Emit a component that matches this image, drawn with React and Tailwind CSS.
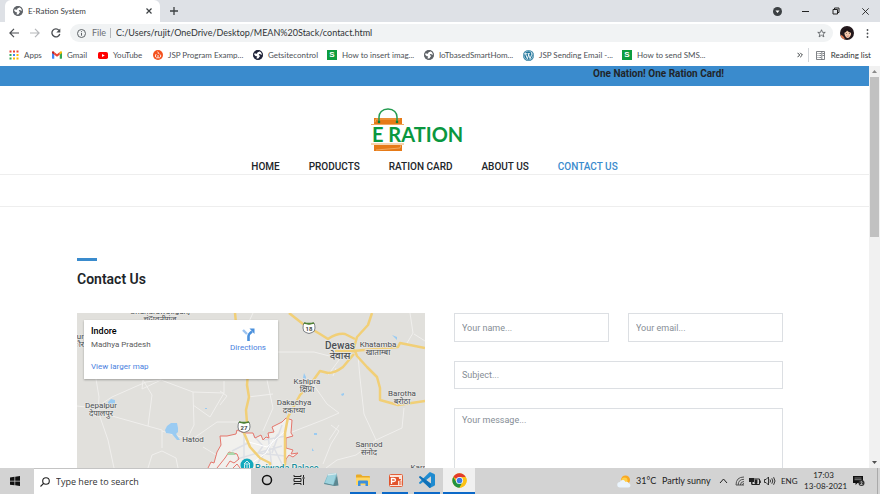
import React from "react";

const ui = "font-['Lato','Open_Sans',sans-serif]";

function Globe({ color = "#5f6368" }) {
  return (
    <svg width="10" height="10" viewBox="0 0 24 24" className="shrink-0">
      <circle cx="12" cy="12" r="11.500" fill={color} />
      <path
        d="M3 8c3-1 3 2 6 1 2-1 1-3 3-4 2 0 3-1 3-3 5 1 7 5 7 9-2 1-3 0-4-1-2-1-4 0-4 2 1 2 4 1 3 3-1 1-3 2-3 5-3 2-6 1-6-1 2-1 3-3 1-4-3 0-6-3-7-5z"
        fill="#fff"
      />
      <circle cx="12" cy="12" r="10.500" fill="none" stroke={color} strokeWidth="2.500" />
    </svg>
  );
}

function AppsIcon() {
  const colors = ["#ea4335", "#ea4335", "#ea4335", "#34a853", "#4285f4", "#fbbc04", "#34a853", "#fbbc04", "#fbbc04"];
  return (
    <svg width="10" height="10" viewBox="0 0 10 10" className="shrink-0">
      {colors.map((c, i) => (
        <rect key={i} x={(i % 3) * 3.500 + 0.5} y={Math.floor(i / 3) * 3.500 + 0.5} width="2" height="2" fill={c} />
      ))}
    </svg>
  );
}

function GmailIcon() {
  return (
    <svg width="10" height="8" viewBox="0 0 20 15" className="shrink-0">
      <path d="M0 2v12c0 .6.400 1 1 1h3.500V6z" fill="#4285f4" />
      <path d="M20 2v12c0 .6-.400 1-1 1h-3.500V6z" fill="#34a853" />
      <path d="M4.500 1.500L10 6l5.500-4.500V7L10 11 4.500 7z" fill="#ea4335" />
      <path d="M0 2C0 0 2-.5 3.500.5l1 1V7L0 3.500z" fill="#c5221f" />
      <path d="M20 2c0-2-2-2.500-3.500-1.500l-1 1V7L20 3.500z" fill="#fbbc04" />
    </svg>
  );
}

function YoutubeIcon() {
  return (
    <svg width="10" height="7" viewBox="0 0 20 14" className="shrink-0">
      <rect width="20" height="14" rx="3.500" fill="#f00" />
      <path d="M8 4l5.500 3L8 10z" fill="#fff" />
    </svg>
  );
}

function JspIcon() {
  return (
    <svg width="10" height="10" viewBox="0 0 20 20" className="shrink-0">
      <circle cx="10" cy="10" r="10" fill="#f4511e" />
      <path d="M9 3.500c3 1.500 1 3.500 2 4.500M6.500 8c-2 2-2.500 6 .5 7.500h6c3.500-1.500 3-6 0-7.500M8 12h4" stroke="#fff" strokeWidth="1.800" fill="none" />
    </svg>
  );
}

function SIcon() {
  return (
    <span className="flex h-[10px] w-[10px] shrink-0 items-center justify-center bg-[#0c9d3f] font-['Liberation_Sans',sans-serif] text-[8px] font-bold leading-none text-white">
      S
    </span>
  );
}

function WordpressIcon() {
  return (
    <svg width="11" height="11" viewBox="0 0 24 24" className="shrink-0">
      <circle cx="12" cy="12" r="12" fill="#21759b" />
      <circle cx="12" cy="12" r="10" fill="none" stroke="#fff" strokeWidth="1.200" />
      <path d="M3.500 8h5M10 8h5M5.500 8l4 11 3-8.500M11.500 8l4 11 3.500-9.500c.5-2-1.500-2.500-1-4.500" stroke="#fff" strokeWidth="2" fill="none" />
    </svg>
  );
}

const bookmarks = [
  { label: "Apps", icon: <AppsIcon />, width: "w-[43px]" },
  { label: "Gmail", icon: <GmailIcon />, width: "w-[46px]" },
  { label: "YouTube", icon: <YoutubeIcon />, width: "w-[55px]" },
  { label: "JSP Program Examp...", icon: <JspIcon />, width: "w-[100px]" },
  { label: "Getsitecontrol", icon: <Globe color="#20243a" />, width: "w-[74px]" },
  { label: "How to insert imag...", icon: <SIcon />, width: "w-[97px]" },
  { label: "IoTbasedSmartHom...", icon: <Globe />, width: "w-[99px]" },
  { label: "JSP Sending Email -...", icon: <WordpressIcon />, width: "w-[99px]" },
  { label: "How to send SMS...", icon: <SIcon />, width: "w-[90px]" },
];

function TabStrip() {
  return (
    <div className="flex h-[22px] shrink-0 items-stretch bg-[#dee1e6] pl-[5px] text-[#3c4043]">
      <div className="flex w-[155px] items-center rounded-t-md bg-white pl-[8px] pr-[7px]">
        <Globe />
        <span className="ml-[5px] flex-1 whitespace-nowrap text-[8px]">E-Ration System</span>
        <button aria-label="Close tab" className="p-px">
          <svg width="6" height="6" viewBox="0 0 6 6" stroke="#3c4043" strokeWidth="1.200">
            <path d="M.5.5l5 5M5.500.5l-5 5" />
          </svg>
        </button>
      </div>
      <button aria-label="New tab" className="ml-[10px]">
        <svg width="8" height="8" viewBox="0 0 8 8" stroke="#3c4043" strokeWidth="1.300">
          <path d="M4 0v8M0 4h8" />
        </svg>
      </button>
      <div className="flex-1" />
      <div className="flex items-center pr-[11px]">
        <button aria-label="Tab search" className="mr-[20px]">
          <svg width="9" height="9" viewBox="0 0 9 9">
            <circle cx="4.500" cy="4.500" r="4.500" fill="#3c4043" />
            <path d="M2.500 3.500h4l-2 2.500z" fill="#fff" />
          </svg>
        </button>
        <button aria-label="Minimize" className="mr-[23px]">
          <svg width="7" height="7" viewBox="0 0 7 7" stroke="#222">
            <path d="M0 3.500h7" />
          </svg>
        </button>
        <button aria-label="Restore" className="mr-[22px]">
          <svg width="8" height="8" viewBox="0 0 8 8" stroke="#222" fill="none">
            <path d="M1 2.500h4.500v4.500H1zM2.500 2.500V1H7v4.500H5.500" />
          </svg>
        </button>
        <button aria-label="Close">
          <svg width="7" height="7" viewBox="0 0 7 7" stroke="#222" strokeWidth=".9">
            <path d="M.3.3l6.400 6.400M6.700.3L.3 6.700" />
          </svg>
        </button>
      </div>
    </div>
  );
}

function Toolbar() {
  return (
    <div className="flex h-[22px] shrink-0 items-center bg-white pl-[9px] pr-[11px]">
      <button aria-label="Back">
        <svg width="10" height="10" viewBox="0 0 10 10" stroke="#4a4d51" strokeWidth="1.200" fill="none">
          <path d="M10 5H1M5 .8L.9 5 5 9.200" />
        </svg>
      </button>
      <button aria-label="Forward" className="ml-[11px]">
        <svg width="10" height="10" viewBox="0 0 10 10" stroke="#b5b7ba" strokeWidth="1.200" fill="none">
          <path d="M0 5h9M5 .8L9.100 5 5 9.200" />
        </svg>
      </button>
      <button aria-label="Reload" className="ml-[11px]">
        <svg width="10" height="10" viewBox="0 0 10 10">
          <path d="M8 2.300A4 4 0 1 0 8.800 6" stroke="#4a4d51" strokeWidth="1.300" fill="none" />
          <path d="M9.300.5v4H5.300z" fill="#4a4d51" />
        </svg>
      </button>
      <div className="ml-[9px] flex h-[18px] flex-1 items-center rounded-full bg-[#f1f3f4] px-[7px] text-[9px]">
        <svg width="9" height="9" viewBox="0 0 9 9" fill="none" stroke="#5f6368">
          <circle cx="4.500" cy="4.500" r="4" />
          <path d="M4.500 4v2.700M4.500 2.200v1" />
        </svg>
        <span className="ml-[6px] w-[13px] text-[#6b6f74]">File</span>
        <span className="mx-[5px] h-[10px] w-px bg-[#b4b7bb]" />
        <input
          aria-label="Address"
          defaultValue="C:/Users/rujit/OneDrive/Desktop/MEAN%20Stack/contact.html"
          className="min-w-0 flex-1 bg-transparent text-[#303336] outline-none"
        />
        <button aria-label="Bookmark this page">
          <svg width="9" height="9" viewBox="0 0 24 24" fill="none" stroke="#4a4d51" strokeWidth="2">
            <path d="M12 2l2.900 7H22l-5.700 4.500 2.100 7.500L12 16.700 5.600 21l2.100-7.500L2 9h7.100z" />
          </svg>
        </button>
      </div>
      <button aria-label="Profile" className="ml-[7px]">
        <svg width="14" height="14" viewBox="0 0 28 28">
          <circle cx="14" cy="14" r="14" fill="#24191d" />
          <path d="M9 10c4-6 12-4 13 2 1 7-3 12-7 12-4-1-7-6-6-14z" fill="#f3c9ad" />
          <path d="M6 14c1-9 9-11 14-7 2 2 3 5 3 7-4-1-7-3-9-5-1 3-4 5-8 5z" fill="#1b1114" />
          <path d="M1 18c4 0 7 3 9 9-5-1-8-4-9-9z" fill="#e07a50" />
          <path d="M13 19c1 1 4 1 5 0-1 2.500-4 2.500-5 0z" fill="#c2383d" />
          <circle cx="12.500" cy="15" r=".9" /><circle cx="18.500" cy="15" r=".9" />
        </svg>
      </button>
      <button aria-label="Menu" className="ml-[12px]">
        <svg width="3" height="9" viewBox="0 0 3 9" fill="#4a4d51">
          <circle cx="1.500" cy="1" r=".9" /><circle cx="1.500" cy="4.500" r=".9" /><circle cx="1.500" cy="8" r=".9" />
        </svg>
      </button>
    </div>
  );
}

function Bookmarks() {
  return (
    <div className="flex h-[22px] shrink-0 items-center bg-white pl-[9px] pr-[9px] text-[8px] text-[#4d5156]">
      {bookmarks.map((b) => (
        <a key={b.label} href="#" className={"flex shrink-0 items-center gap-[5px] whitespace-nowrap " + b.width}>
          {b.icon}
          {b.label}
        </a>
      ))}
      <div className="flex-1" />
      <button aria-label="More bookmarks">
        <svg width="6" height="6" viewBox="0 0 6 6" stroke="#3c4043" fill="none">
          <path d="M.5.8L2.700 3 .5 5.200M3.200.8L5.400 3 3.200 5.200" />
        </svg>
      </button>
      <span className="ml-[5px] mr-[7px] h-[14px] w-px bg-[#d2d5d9]" />
      <button className="flex items-center gap-[6px] whitespace-nowrap text-[#303336]">
        <svg width="9" height="9" viewBox="0 0 9 9" fill="none" stroke="#5f6368" strokeWidth=".8">
          <path d="M.5.5h8v8h-8zM5.800.5v8M1.500 2.500h1M3.300 2.500h1.700M1.500 4.500h1M3.300 4.500h1.700M1.500 6.500h1M3.300 6.500h1.700M6.500 2.500h1.500M6.500 4.500h1.500" />
        </svg>
        Reading list
      </button>
    </div>
  );
}

function Logo() {
  return (
    <svg width="92" height="44" viewBox="0 0 92 44" className="mr-[36px] overflow-visible">
      <path d="M3 10h28v6H3zM3 37h28v6H3z" fill="#e67a17" />
      <path d="M4 14l1-3h24M5 42l24-2 1-3" stroke="#f6b26b" strokeWidth=".8" fill="none" />
      <path d="M0 16.500h33M0 36h33" stroke="#f0a860" strokeWidth="1" />
      <path d="M8 14V9c0-4 3-8 9-8s9 4 9 8v5" stroke="#239b50" strokeWidth="1.500" fill="none" />
      <circle cx="8" cy="14" r="1.300" fill="#087c35" /><circle cx="26" cy="14" r="1.300" fill="#087c35" />
      <text x="1" y="34" fontSize="20" fontWeight="700" fill="#0a973f" fontFamily="Lato, sans-serif">E RATION</text>
    </svg>
  );
}

const minorRoads = [
  "M19 66L22 84 21 98 31 127 37 155",
  "M0 93L18 95 35 84 69 69 84 67",
  "M35 103L85 117 85 135",
  "M66 67L75 82 71 113",
  "M84 67L116 79 117 112 110 126 85 118",
  "M116 79L147 80 147 68M116 92L133 104 147 80",
  "M117 125L140 109 163 109M126 134L146 146",
  "M71 155L75 142 85 138 99 145 101 155",
  "M171 39L205 39 237 39 260 45",
  "M176 0L168 17M190 67L196 95 186 118",
  "M236 71L250 91 262 100 246 107 215 119",
  "M281 43L283 65 287 101 299 127 325 115 327 95",
  "M299 127L279 142 260 147 249 155",
  "M333 0L336 20 330 30M337 21L348 28",
  "M251 62L265 43M256 63L259 55",
  "M254 112L262 118 254 131 246 151M262 112L252 127",
  "M0 34L11 26 19 15M66 67L65 76 84 67",
  "M171 84L196 81M143 78L150 83 143 92",
];

const cityStreets =
  "M167 120L167 155M176 122L186 133 181 140M191 122L195 155M205 112L195 140M160 146L205 133M181 140L208 143M171 130L155 138M187 127L209 123M180 151L201 121M196 133L207 155";

const majorRoads = [
  "M212 0L226 11 243 21 251 26Q260 20 268 21L278 26",
  "M295 0L291 12 280 24 276 38 321 34 323 30 348 35",
  "M277 41L266 54 Q258 60 251 60L243 58 235 69 223 82 211 104 208 120 208 155",
  "M258 38L278 38 280 43 290 54 300 64 303 75 303 87 321 92 348 88",
  "M158 0L159 10 171 60 170 72 172 84 169 97 170 110 167 120 173 134 183 145 193 150 193 155",
];

const places = [
  { x: 263, y: 36, name: "Dewas", local: "देवास", size: 10 },
  { x: 301, y: 34, name: "Khatamba", local: "खाताम्बा", size: 8 },
  { x: 230, y: 71, name: "Kshipra", local: "क्षिप्रा", size: 8 },
  { x: 217, y: 92, name: "Dakachya", local: "दकाच्या", size: 8 },
  { x: 325, y: 83, name: "Barotha", local: "बरोठा", size: 8 },
  { x: 292, y: 134, name: "Sannod", local: "संनोद", size: 8 },
  { x: 24, y: 95, name: "Depalpur", local: "देपालपुर", size: 8 },
  { x: 116, y: 129, name: "Hatod", local: "", size: 8 },
  { x: 83, y: 1, name: "Chandrawatiganj", local: "चंद्रावतीगंज", size: 8 },
  { x: 1, y: 26, name: "aur", local: "ौर", size: 8, edge: true },
  { x: 341, y: 157, name: "Karr", local: "", size: 8 },
];

function Shield({ x, y, n }) {
  return (
    <g transform={`translate(${x} ${y})`}>
      <path d="M-5-5Q0-3 5-5Q6-3 6 0Q6 4 3 4.500L0 5.500-3 4.500Q-6 4-6 0Q-6-3-5-5z" fill="#fff" stroke="#606569" strokeWidth=".8" />
      <path d="M-5-5Q0-3.500 5-5" stroke="#4f8235" strokeWidth="1.800" fill="none" />
      <text y="3" textAnchor="middle" fontSize="6" fontWeight="700" fill="#444">{n}</text>
    </g>
  );
}

const cityEdge =
  "M131 155L134 149 137 150 140 139 144 132 143 123 150 123 159 121 160 117 167 120 176 120 178 125 184 122 186 127 189 124 192 125 191 120 197 119 195 114 205 109 209 105 215 107 214 120 216 123 209 125 209 135 216 137 214 141 221 140 216 144 212 142 209 146 208 155";

function Map() {
  return (
    <div className="relative overflow-hidden bg-[#e1e0dc]">
      <svg
        viewBox="0 0 348 155"
        className="absolute left-0 top-0 w-full overflow-visible font-['Roboto','Noto_Sans',sans-serif]"
        role="img"
        aria-label="Map of Indore"
      >
        <g fill="none" stroke="#f0efed" strokeWidth="1">
          {minorRoads.map((d) => <path key={d} d={d} />)}
        </g>
        <path d={cityEdge} fill="#f1f0ed" />
        <path d={cityStreets} fill="none" stroke="#dddfe5" strokeWidth="1.500" />
        <path d="M168 128L190 134 207 119M175 150L189 140 197 126" fill="none" stroke="#fff" />
        <path
          d={cityEdge + "M140 155L148 145 152 139 160 141 162 146 157 150 153 148 149 154M156 155L160 151 163 155"}
          fill="none" stroke="#e5766c" strokeWidth="1"
        />
        <path d="M150 140l6-1 3 3-8 0z" fill="#a9d9ac" />
        <g fill="none" stroke="#f1cf77" strokeWidth="2.500" strokeLinejoin="round">
          {majorRoads.map((d) => <path key={d} d={d} />)}
        </g>
        <path
          fill="#9acbf2"
          d="M90 113l4-3 6 0 1 5 0 4-2 2 4 6-3 0-5-6-6-1-1-3zM31 89l3-3 4 1 0 5-7 2zM315 22l5 2 0-2 0 5zM227 60l2 4-1 5-2-4zM264 81l3-1 0 2-2 1zM128 95h2v1h-2zM237 120h3v2h-3zM235 135l2 3h-2z"
        />
        <Shield x={232} y={15} n="18" />
        <Shield x={167} y={114} n="27" />
        <g fill="#4b5054" stroke="#e9e8e5" strokeWidth="1.500" paintOrder="stroke" strokeLinejoin="round">
          {places.map((p) => (
            <g key={p.name} textAnchor={p.edge ? "end" : "middle"} fontSize={p.size} fontWeight={p.size > 8 ? 500 : 400}>
              <text x={p.edge ? 7 : p.x} y={p.y}>{p.name}</text>
              {p.local && <text x={p.edge ? 7 : p.x} y={p.y + p.size}>{p.local}</text>}
            </g>
          ))}
        </g>
        <circle cx="170" cy="152" r="6.500" fill="#12a9bd" />
        <path d="M167 151l3-3 3 3zM167.500 151.500v4M170 151.500v4M172.500 151.500v4" stroke="#fff" strokeWidth=".8" fill="none" />
        <text x="178" y="158" fontSize="9" fontWeight="500" fill="#178d9b" stroke="#f3f3f1" strokeWidth="1.500" paintOrder="stroke">Rajwada Palace</text>
      </svg>
      <div className="relative ml-[7px] mt-[7px] flex h-[59px] w-[194px] justify-between bg-white pl-[7px] pr-[12px] pt-[5px] text-[8px] shadow-[0_1px_2px_rgba(0,0,0,0.3)]">
        <div className="flex flex-col items-start">
          <div className="text-[9px] font-medium leading-[12px] text-black">Indore</div>
          <div className="mt-[2px] leading-[12px] text-[#5b5b5b]">Madhya Pradesh</div>
          <a href="#" className="mt-[10px] leading-[12px] text-[#4a7fe0]">View larger map</a>
        </div>
        <a href="#" className="flex flex-col items-center pt-[3px] leading-[12px] text-[#4a7fe0]">
          <svg width="13" height="13" viewBox="0 0 13 13" className="mb-[1px]">
            <path d="M1 2l4 4" stroke="#9cc3f0" strokeWidth="2.400" />
            <path d="M6.500 13V8.500Q6.500 6 10 3.500" stroke="#4a90dc" strokeWidth="2.600" fill="none" />
            <path d="M7.500 0.500H12.500V6z" fill="#4a90dc" />
          </svg>
          Directions
        </a>
      </div>
    </div>
  );
}

const navItems = ["HOME", "PRODUCTS", "RATION CARD", "ABOUT US", "CONTACT US"];
const field = "w-full min-w-0 border border-[#dcdfe3] bg-white px-[7px] text-[9px] text-[#495057] outline-none placeholder:text-[#868e96]";

function Page() {
  return (
    <main className="min-w-0 flex-1 overflow-hidden bg-white font-['Roboto',sans-serif] text-[#212529]">
      <div className="flex h-[20px] justify-end bg-[#3a8bcd] pr-[145px] text-[10px] font-bold leading-[16px]">
        One Nation! One Ration Card!
      </div>
      <header className="flex flex-col items-center border-b border-[#eeeeee] pt-[22px]">
        <Logo />
        <nav className="mt-[9px] flex h-[13px] gap-[29px] text-[10px] font-medium leading-[12px]">
          {navItems.map((n) => (
            <a key={n} href="#" className={n === "CONTACT US" ? "text-[#3a8bcd]" : "text-[#212529]"}>{n}</a>
          ))}
        </nav>
      </header>
      <div className="h-[32px] border-b border-[#eeeeee]" />
      <section className="pl-[77px] pr-[86px] pt-[51px]">
        <div className="h-[3px] w-[20px] bg-[#3a8bcd]" />
        <h1 className="mt-[8px] text-[14px] font-semibold leading-[20px]">Contact Us</h1>
        <div className="mt-[24px] grid grid-cols-[348fr_329fr] gap-[29px]">
          <Map />
          <form className="grid grid-cols-2 gap-x-[19px] gap-y-[19px]">
            <input aria-label="Your name" placeholder="Your name..." className={field + " h-[29px]"} />
            <input aria-label="Your email" placeholder="Your email..." className={field + " h-[29px]"} />
            <input aria-label="Subject" placeholder="Subject..." className={field + " col-span-2 h-[28px]"} />
            <textarea aria-label="Your message" placeholder="Your message..." rows={8} className={field + " col-span-2 resize-none pt-[5px]"} />
          </form>
        </div>
      </section>
    </main>
  );
}

function Scrollbar() {
  return (
    <div aria-hidden="true" className="flex w-[11px] shrink-0 flex-col items-center bg-[#f1f1f1]">
      <svg width="5" height="11" viewBox="0 0 5 11"><path d="M0 7l2.500-3L5 7z" fill="#8a8a8a" /></svg>
      <div className="h-[160px] w-[9px] bg-[#c1c1c1]" />
      <div className="flex-1" />
      <svg width="5" height="11" viewBox="0 0 5 11"><path d="M0 4l2.500 3L5 4z" fill="#505050" /></svg>
    </div>
  );
}

const TaskView = (
  <svg width="12" height="12" viewBox="0 0 12 12" fill="none" stroke="#222">
    <path d="M1 1v1.500h7V1M1 11V9.500h7V11M1 4.500h7v3H1zM10.500 1v2M10.500 5v6" />
    <path d="M9.500 4h2" strokeWidth="1.500" />
  </svg>
);
const Cortana = (
  <svg width="12" height="12" viewBox="0 0 12 12" fill="none" stroke="#111" strokeWidth="1.500"><circle cx="6" cy="6" r="4.500" /></svg>
);
const Notepad = (
  <svg width="16" height="14" viewBox="0 0 16 14">
    <path d="M5 1l8-1 1 1.500-3 11L1 10.500z" fill="#77b9c9" />
    <path d="M5 2l8-.5-3 10.500-8-2z" fill="#9ed3de" />
    <path d="M14 2l1.500 10.500-4 .5L1 11l.5-1 9 2z" fill="#5c8791" />
    <path d="M5 1l8-1 .5 1.500-9 1z" fill="#d8e9ec" />
  </svg>
);
const Folder = (
  <svg width="14" height="12" viewBox="0 0 14 12">
    <path d="M0 1.500Q0 .5 1 .5h4L6.500 2H13q1 0 1 1v8H0z" fill="#e9aa25" />
    <path d="M0 3.500h14V11H0z" fill="#ffd766" />
    <path d="M2 12V7.500Q2 6.500 3 6.500h8q1 0 1 1V12H9.500V9.500h-5V12z" fill="#3c8fda" />
  </svg>
);
const Powerpoint = (
  <svg width="15" height="13" viewBox="0 0 15 13">
    <rect x="1.500" y=".5" width="13" height="12" rx="1" fill="#fbe4da" stroke="#e2603a" />
    <path d="M1 3h9v8H1z" fill="#e2532b" />
    <path d="M3.500 10V4.500h2q2 0 2 1.500t-2 1.500h-2" stroke="#fff" strokeWidth="1.300" fill="none" />
    <path d="M11 8h2.500M11 10h2.500" stroke="#e2532b" />
    <path d="M11 3a2 2 0 1 0 2 2h-2z" fill="#e2532b" />
  </svg>
);
const Vscode = (
  <svg width="16" height="16" viewBox="0 0 100 100">
    <path d="M71 1L96 13Q100 15 100 20V80q0 4-4 6L71 99q-3 1-6-1L25 62 10 74q-3 2-6 0L1 71q-3-3 0-6L64 3q3-3 7-2zM75 27L45 50l30 23z" fill="#1f8bd0" fillRule="evenodd" />
    <path d="M25 38L10 26q-3-2-6 0L1 29q-3 3 0 6l64 63q3 2 6 1L75 73z" fill="#0f71b8" />
  </svg>
);
const Chrome = (
  <svg width="15" height="15" viewBox="0 0 48 48">
    <circle cx="24" cy="24" r="23" fill="#fbc116" />
    <path d="M24 24L4.100 12.500A23 23 0 0 1 43.900 12.500H24z" fill="#e33b2e" />
    <path d="M24 24L14 29.800 4.100 12.500A23 23 0 0 0 24 47L34 29.800z" fill="#229342" />
    <path d="M24 12.500H43.900A23 23 0 0 1 24 47L34 29.800z" fill="#fbc116" />
    <circle cx="24" cy="24" r="11.500" fill="#fff" />
    <circle cx="24" cy="24" r="9" fill="#3d7ce8" />
  </svg>
);

const tasks = [
  { label: "Cortana", icon: Cortana },
  { label: "Task View", icon: TaskView },
  { label: "Notepad", icon: Notepad },
  { label: "File Explorer", icon: Folder, open: true },
  { label: "PowerPoint", icon: Powerpoint, open: true },
  { label: "Visual Studio Code", icon: Vscode, open: true },
  { label: "Google Chrome", icon: Chrome, open: true, active: true },
];

function Taskbar() {
  return (
    <footer className="flex h-[26px] shrink-0 items-stretch bg-[#d3d3d3] text-[9px] text-[#222]">
      <button aria-label="Start" className="flex w-[34px] items-center justify-center pr-[4px]">
        <svg width="10" height="10" viewBox="0 0 10 10" fill="#111">
          <path d="M0 1.400L4.500.8V4.700H0zM5.200.7L10 0v4.700H5.200zM0 5.400h4.500v3.900L0 8.700zM5.200 5.400H10V10l-4.800-.7z" />
        </svg>
      </button>
      <label className="flex w-[217px] items-center border-t border-[#c4c4c4] bg-white pl-[6px]">
        <svg width="10" height="10" viewBox="0 0 10 10" fill="none" stroke="#222" strokeWidth="1.100">
          <circle cx="6" cy="4" r="3.300" /><path d="M3.600 6.400L.5 9.500" />
        </svg>
        <input aria-label="Search" placeholder="Type here to search" className="ml-[6px] min-w-0 flex-1 bg-transparent font-['Open_Sans',sans-serif] outline-none placeholder:text-[#333]" />
      </label>
      <div className="flex">
        {tasks.map((t) => (
          <button
            key={t.label}
            aria-label={t.label}
            className={"flex w-[32px] flex-col items-center " + (t.active ? "bg-[#f0f0f0]" : "")}
          >
            <span className="flex flex-1 items-center">{t.icon}</span>
            <span className={"h-[2px] " + (t.active ? "w-full " : "w-[26px] ") + (t.open ? "bg-[#0c69c8]" : "")} />
          </button>
        ))}
      </div>
      <div className="flex-1" />
      <div className="flex items-center whitespace-nowrap">
        <svg width="14" height="13" viewBox="0 0 28 26">
          <circle cx="17" cy="10" r="9" fill="#f9a822" />
          <circle cx="15" cy="11" r="6" fill="#ffd04a" />
          <path d="M6 25a5.500 5.500 0 0 1 0-11c1-5 9-6 11 0 4-2 7 1 7 3 4 1 4 8-1 8z" fill="#eaf4fd" />
        </svg>
        <span className="ml-[5px] w-[20px]">31°C</span>
        <span className="ml-[6px] w-[53px]">Partly sunny</span>
        <button aria-label="Show hidden icons" className="ml-[4px]">
          <svg width="9" height="6" viewBox="0 0 9 6" fill="none" stroke="#222"><path d="M1 5l3.500-4L8 5" /></svg>
        </button>
        <svg width="10" height="10" viewBox="0 0 10 10" fill="none" stroke="#444" strokeWidth=".9" className="ml-[7px]">
          <path d="M1 9Q1 1 9 1M3.200 9Q3.200 3.300 9 3.300M5.400 9Q5.400 5.500 9 5.500M7.500 9Q7.500 7.500 9 7.500M1 9h8" />
        </svg>
        <svg width="12" height="9" viewBox="0 0 12 9" className="ml-[4px]">
          <path d="M3 2h7.500v5.500H3z" fill="none" stroke="#222" /><path d="M0 1h5v4H0z" fill="#222" /><path d="M2.500 5v2.500M11.500 3.500v2.500M6 3h2v3.500H6z" stroke="#222" fill="#222" strokeWidth=".8" />
        </svg>
        <svg width="12" height="10" viewBox="0 0 12 10" fill="none" stroke="#222" strokeWidth=".9" className="ml-[3px]">
          <path d="M.5 3.500h1.500L4.500 1v8L2 6.500H.5zM6 3.500q1 1.500 0 3M7.800 2.300q2 2.700 0 5.400M9.600 1.200q2.800 3.800 0 7.600" />
        </svg>
        <span className="ml-[5px] w-[16px] text-[8px]">ENG</span>
        <div className="ml-[7px] w-[39px] text-center text-[8px] leading-[11px]">
          <div>17:03</div>
          <div>13-08-2021</div>
        </div>
        <button aria-label="Notifications" className="ml-[10px]">
          <svg width="12" height="12" viewBox="0 0 12 12">
            <path d="M0 1h10v7H4.500L2.500 10V8H0z" fill="#111" />
            <path d="M1.500 3h7M1.500 4.700h7" stroke="#aaa" strokeWidth=".7" />
            <circle cx="8.500" cy="8" r="3" fill="#333" /><path d="M7.500 7q1-1 1.500 0t-1.500 2.500h2" stroke="#fff" strokeWidth=".6" fill="none" />
          </svg>
        </button>
        <span className="ml-[12px] mr-[2px] h-full w-px bg-[#aaa]" />
      </div>
    </footer>
  );
}

export default function App() {
  return (
    <div className={"flex h-screen flex-col overflow-hidden bg-white pb-px pr-[4px] " + ui}>
      <TabStrip />
      <Toolbar />
      <Bookmarks />
      <div className="flex min-h-0 flex-1">
        <Page />
        <Scrollbar />
      </div>
      <Taskbar />
    </div>
  );
}
